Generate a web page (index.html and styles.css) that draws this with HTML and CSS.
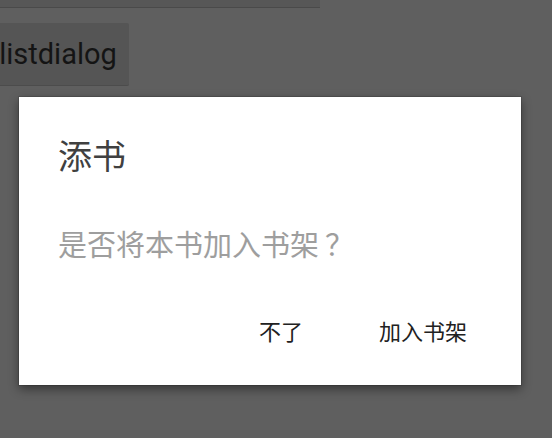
FILE: index.html
```html
<!DOCTYPE html>
<html lang="zh">
<head>
<meta charset="utf-8">
<link rel="stylesheet" href="styles.css">
</head>
<body>
<div class="screen">
  <div class="topbar"></div>
  <div class="btn-row"><div class="btn">listdialog</div></div>
  <div class="dialog">
    <div class="title">添书</div>
    <div class="message">是否将本书加入书架<span class="qm">？</span></div>
    <div class="actions">
      <span class="action">不了</span>
      <span class="action">加入书架</span>
    </div>
  </div>
</div>
</body>
</html>
```
FILE: styles.css
```css
html, body {
  margin: 0;
  padding: 0;
}
body {
  width: 552px;
  height: 438px;
  overflow: hidden;
  background: #5f5f5f;
  font-family: "Noto Sans CJK SC", "Noto Sans", sans-serif;
}
.screen {
  position: relative;
  width: 552px;
  height: 438px;
}
.topbar {
  width: 320px;
  height: 7px;
  background: #575757;
  border-bottom: 1px solid #4a4a4a;
}
.btn-row {
  margin-top: 15px;
}
.btn {
  margin-left: -13px;
  width: 142px;
  height: 63px;
  box-sizing: border-box;
  background: #555555;
  border-radius: 2px;
  border-bottom: 1px solid #4c4c4c;
  display: flex;
  align-items: center;
  justify-content: center;
  font-family: Roboto, "Liberation Sans", sans-serif;
  font-size: 29px;
  color: #141414;
}
.dialog {
  position: absolute;
  left: 19px;
  top: 97px;
  width: 502px;
  height: 288px;
  box-sizing: border-box;
  background: #ffffff;
  box-shadow: 0 0 0 1px rgba(0,0,0,0.12), 0 4px 10px rgba(0,0,0,0.45);
  padding: 41px 0 0 39px;
  display: flex;
  flex-direction: column;
}
.title {
  font-size: 34px;
  line-height: 34px;
  color: #404040;
}
.message {
  margin-top: 57px;
  font-size: 29px;
  line-height: 28px;
  color: #9e9e9e;
}
.qm {
  display: inline-block;
  width: 1em;
  margin-left: 6px;
  text-align: center;
}
.actions {
  margin-top: 62px;
  display: flex;
  justify-content: flex-end;
  gap: 76px;
  padding-right: 54px;
}
.action {
  font-size: 22px;
  line-height: 22px;
  color: #212121;
}
```
